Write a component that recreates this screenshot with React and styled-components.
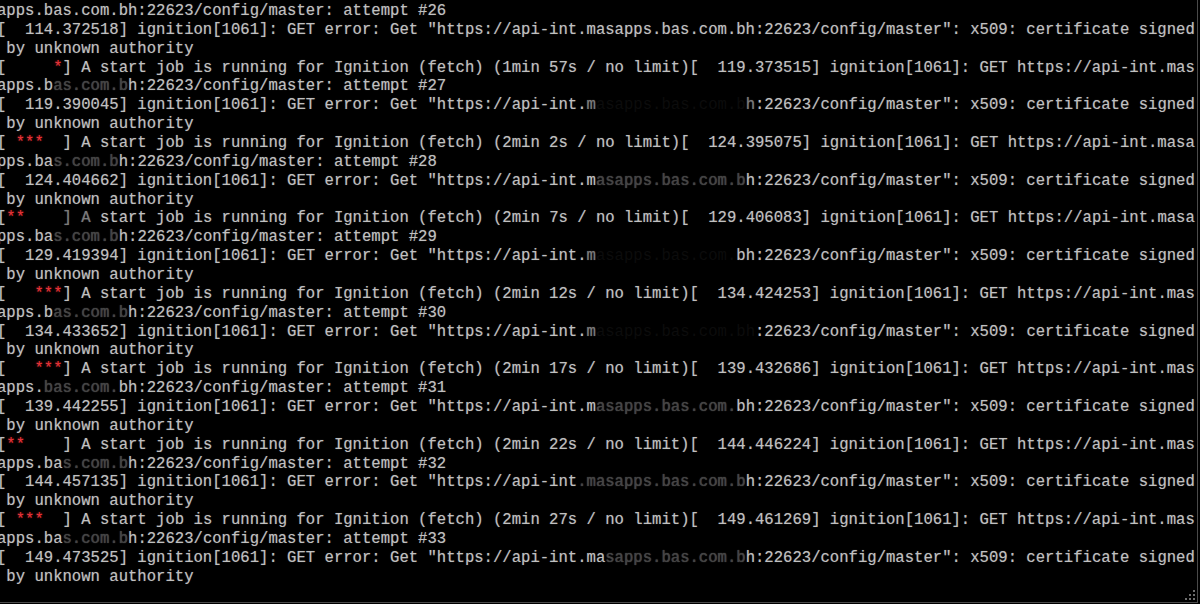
import React from "react";
import styled, { createGlobalStyle } from "styled-components";

const GlobalStyle = createGlobalStyle`
  html, body {
    margin: 0;
    padding: 0;
    background: #000;
  }
  #root {
    width: 1200px;
    height: 604px;
  }
`;

const Screen = styled.div`
  width: 1200px;
  height: 604px;
  background: #000;
  overflow: hidden;
  display: flex;
  flex-direction: column;
`;

const Frame = styled.div`
  position: relative;
  box-sizing: border-box;
  width: 1198px;
  height: 603px;
  border-right: 1px solid #4a4a4a;
  border-bottom: 1px solid #4a4a4a;
  overflow: hidden;
`;

const Console = styled.div`
  display: flex;
  flex-direction: column;
  margin-left: -3px;
  padding-top: 2px;
  font-family: "Liberation Mono", "DejaVu Sans Mono", monospace;
  font-size: 15.6px;
  line-height: 18.87px;
  color: #c0c0c0;
  white-space: pre;
`;

const Line = styled.div`
  height: 18.87px;
`;

const toneColors = {
  n: "#c0c0c0",
  r: "#e8343a",
  d: "#444444",
  m: "#7a7a7a",
  h: "#0c0c0c",
};

const Seg = styled.span`
  color: ${(p) => toneColors[p.$tone]};
  text-shadow: ${(p) =>
    p.$tone === "r"
      ? "0 0 2px rgba(255, 40, 40, 0.6)"
      : p.$tone === "h"
      ? "none"
      : "0 0 1px rgba(200, 200, 200, 0.45)"};
`;

const Grip = styled.svg`
  position: absolute;
  right: 1px;
  bottom: 1px;
  width: 11px;
  height: 11px;
`;

const lines = [
  "apps.bas.com.bh:22623/config/master: attempt #26",
  '[  114.372518] ignition[1061]: GET error: Get "https://api-int.masapps.bas.com.bh:22623/config/master": x509: certificate signed',
  " by unknown authority",
  "[     {r:*}] A start job is running for Ignition (fetch) (1min 57s / no limit)[  119.373515] ignition[1061]: GET https://api-int.mas",
  "apps.b{d:as.com.b}h:22623/config/master: attempt #27",
  '[  119.390045] ignition[1061]: GET error: Get "https://api-int.{m:m}{h:asapps.bas.com.b}{m:h}:22623/config/master": x509: certificate signed',
  " by unknown authority",
  "[ {r:***}  ] A start job is running for Ignition (fetch) (2min 2s / no limit)[  124.395075] ignition[1061]: GET https://api-int.masa",
  "pps.ba{d:s.com.b}h:22623/config/master: attempt #28",
  '[  124.404662] ignition[1061]: GET error: Get "https://api-int.m{d:asapps.bas.com.b}h:22623/config/master": x509: certificate signed',
  " by unknown authority",
  "[{r:**}    {m:] A }start job is running for Ignition (fetch) (2min 7s / no limit)[  129.406083] ignition[1061]: GET https://api-int.masa",
  "pps.ba{d:s.com.b}h:22623/config/master: attempt #29",
  '[  129.419394] ignition[1061]: GET error: Get "https://api-int.{m:m}{h:asapps.bas.com.}bh:22623/config/master": x509: certificate signed',
  " by unknown authority",
  "[   {r:***}] A start job is running for Ignition (fetch) (2min 12s / no limit)[  134.424253] ignition[1061]: GET https://api-int.mas",
  "apps.b{d:as.com.b}h:22623/config/master: attempt #30",
  '[  134.433652] ignition[1061]: GET error: Get "https://api-int.{m:m}{h:asapps.bas.com.bh}:22623/config/master": x509: certificate signed',
  " by unknown authority",
  "[   {r:***}] A start job is running for Ignition (fetch) (2min 17s / no limit)[  139.432686] ignition[1061]: GET https://api-int.mas",
  "apps.{d:bas.com.}bh:22623/config/master: attempt #31",
  '[  139.442255] ignition[1061]: GET error: Get "https://api-int.m{d:asapps.bas.com.}bh:22623/config/master": x509: certificate signed',
  " by unknown authority",
  "[{r:**}    ] A start job is running for Ignition (fetch) (2min 22s / no limit)[  144.446224] ignition[1061]: GET https://api-int.mas",
  "apps.ba{d:s.com.b}h:22623/config/master: attempt #32",
  '[  144.457135] ignition[1061]: GET error: Get "https://api-int{d:.masapps.bas.com.b}h:22623/config/master": x509: certificate signed',
  " by unknown authority",
  "[ {r:***}  ] A start job is running for Ignition (fetch) (2min 27s / no limit)[  149.461269] ignition[1061]: GET https://api-int.mas",
  "apps.ba{d:s.com.b}h:22623/config/master: attempt #33",
  '[  149.473525] ignition[1061]: GET error: Get "https://api-int.ma{d:sapps.bas.com.b}h:22623/config/master": x509: certificate signed',
  " by unknown authority",
];

function parse(line) {
  const out = [];
  const re = /\{([rdhm]):([^}]*)\}/g;
  let last = 0;
  let m;
  while ((m = re.exec(line)) !== null) {
    if (m.index > last) out.push({ t: line.slice(last, m.index), k: "n" });
    out.push({ t: m[2], k: m[1] });
    last = re.lastIndex;
  }
  if (last < line.length) out.push({ t: line.slice(last), k: "n" });
  return out;
}

export default function App() {
  return (
    <>
      <GlobalStyle />
      <Screen>
        <Frame>
          <Console>
            {lines.map((line, i) => (
              <Line key={i}>
                {parse(line).map((s, j) => (
                  <Seg key={j} $tone={s.k}>
                    {s.t}
                  </Seg>
                ))}
              </Line>
            ))}
          </Console>
          <Grip viewBox="0 0 11 11">
            <g fill="#6e6e6e">
              <rect x="8" y="0" width="2" height="2" />
              <rect x="4" y="4" width="2" height="2" />
              <rect x="8" y="4" width="2" height="2" />
              <rect x="0" y="8" width="2" height="2" />
              <rect x="4" y="8" width="2" height="2" />
              <rect x="8" y="8" width="2" height="2" />
            </g>
          </Grip>
        </Frame>
      </Screen>
    </>
  );
}
